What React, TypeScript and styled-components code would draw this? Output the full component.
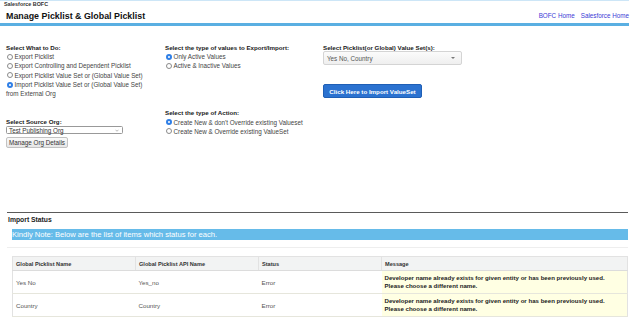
import React from 'react';
import styled, { createGlobalStyle } from 'styled-components';

const GlobalStyle = createGlobalStyle`
  html, body {
    margin: 0;
    padding: 0;
    background: #ffffff;
    font-family: 'Liberation Sans', Arial, Helvetica, sans-serif;
    color: #1e1e1e;
  }
`;

const whatToDo = [
  { label: 'Export Picklist', checked: false },
  { label: 'Export Controlling and Dependent Picklist', checked: false },
  { label: 'Export Picklist Value Set or (Global Value Set)', checked: false },
  { label: 'Import Picklist Value Set or (Global Value Set)', checked: true },
];

const valueTypes = [
  { label: 'Only Active Values', checked: true },
  { label: 'Active & Inactive Values', checked: false },
];

const actions = [
  { label: "Create New & don't Override existing Valueset", checked: true },
  { label: 'Create New & Override existing ValueSet', checked: false },
];

const results = [
  { name: 'Yes No', api: 'Yes_no', status: 'Error' },
  { name: 'Country', api: 'Country', status: 'Error' },
];

const MESSAGE =
  'Developer name already exists for given entity or has been previously used.';

const Radio: React.FC<{ label: string; checked: boolean }> = ({
  label,
  checked,
}) => (
  <RadioRow>
    <Circle $checked={checked} />
    <span>{label}</span>
  </RadioRow>
);

export default function App() {
  return (
    <Page>
      <GlobalStyle />
      <Header>
        <BrandBlock>
          <Brand>Salesforce BOFC</Brand>
          <Title>Manage Picklist &amp; Global Picklist</Title>
        </BrandBlock>
        <Links>
          <NavLink>BOFC Home</NavLink>
          <NavLink>Salesforce Home</NavLink>
        </Links>
      </Header>

      <Form>
        <Field>
          <Label>Select What to Do:</Label>
          {whatToDo.map((o) => (
            <Radio key={o.label} {...o} />
          ))}
          <Plain>from External Org</Plain>
        </Field>
        <Field>
          <Label>Select the type of values to Export/Import:</Label>
          {valueTypes.map((o) => (
            <Radio key={o.label} {...o} />
          ))}
        </Field>
        <Field>
          <Label>Select Picklist(or Global) Value Set(s):</Label>
          <MultiSelect>
            <span>Yes No, Country</span>
            <Caret />
          </MultiSelect>
          <ImportButton>Click Here to Import ValueSet</ImportButton>
        </Field>

        <Field $offset={9}>
          <Label>Select Source Org:</Label>
          <OrgSelect>
            <span>Test Publishing Org</span>
            <Chevron viewBox="0 0 8 5">
              <path d="M1 1 L4 4 L7 1" fill="none" stroke="#666" strokeWidth="0.9" />
            </Chevron>
          </OrgSelect>
          <GreyButton>Manage Org Details</GreyButton>
        </Field>
        <Field>
          <Label>Select the type of Action:</Label>
          {actions.map((o) => (
            <Radio key={o.label} {...o} />
          ))}
        </Field>
        <div />
      </Form>

      <Status>
        <StatusTitle>Import Status</StatusTitle>
        <Note>Kindly Note: Below are the list of items which status for each.</Note>
        <Spacer />
        <Table>
          <colgroup>
            <col style={{ width: 123 }} />
            <col style={{ width: 123 }} />
            <col style={{ width: 123 }} />
            <col />
          </colgroup>
          <thead>
            <tr>
              <Th>Global Picklist Name</Th>
              <Th>Global Picklist API Name</Th>
              <Th>Status</Th>
              <Th>Message</Th>
            </tr>
          </thead>
          <tbody>
            {results.map((r) => (
              <tr key={r.name}>
                <Td>{r.name}</Td>
                <Td>{r.api}</Td>
                <Td>{r.status}</Td>
                <MessageCell>
                  {MESSAGE}
                  <br />
                  Please choose a different name.
                </MessageCell>
              </tr>
            ))}
          </tbody>
        </Table>
      </Status>
    </Page>
  );
}

// Styled Components Definitions
const Page = styled.div`
  width: 640px;
  height: 322px;
  overflow: hidden;
  font-size: 6.3px;
`;

const Header = styled.div`
  width: 629px;
  display: flex;
  justify-content: space-between;
  align-items: flex-end;
  border-top: 1.5px solid #cde6f7;
  border-bottom: 3px solid #5aafe2;
  padding: 1px 0 2px 0;
  box-sizing: border-box;
  height: 26px;
`;

const BrandBlock = styled.div`
  display: flex;
  flex-direction: column;
  padding-left: 4px;
`;

const Brand = styled.div`
  font-size: 5.4px;
  font-weight: 700;
  color: #333;
  line-height: 7px;
  margin-bottom: 3px;
`;

const Title = styled.div`
  font-size: 8.9px;
  font-weight: 700;
  color: #111;
  line-height: 10px;
  padding-left: 2px;
`;

const Links = styled.div`
  display: flex;
  gap: 6px;
  padding-bottom: 2px;
`;

const NavLink = styled.span`
  color: #3b3bd6;
  font-size: 6.3px;
`;

const Form = styled.div`
  display: grid;
  grid-template-columns: 159px 158px 150px;
  padding: 18px 0 0 6px;
  row-gap: 11px;
`;

const Field = styled.div<{ $offset?: number }>`
  display: flex;
  flex-direction: column;
  align-items: flex-start;
  padding-top: ${(p) => p.$offset || 0}px;
`;

const Label = styled.div`
  font-weight: 700;
  font-size: 6.2px;
  line-height: 8px;
  color: #1a1a1a;
`;

const RadioRow = styled.div`
  display: flex;
  align-items: center;
  gap: 2px;
  height: 9.3px;
  color: #444;
`;

const Circle = styled.span<{ $checked: boolean }>`
  flex-shrink: 0;
  display: block;
  width: 6px;
  height: 6px;
  border-radius: 50%;
  box-sizing: border-box;
  border: ${(p) => (p.$checked ? '2px solid #2f7fe6' : '0.7px solid #8a8a8a')};
  background: #fff;
  margin-left: 0.5px;
`;

const Plain = styled.div`
  height: 9.3px;
  line-height: 9.3px;
  color: #444;
`;

const MultiSelect = styled.div`
  margin-top: -1px;
  width: 139px;
  height: 14px;
  box-sizing: border-box;
  border: 0.7px solid #d4d4d4;
  border-radius: 2px;
  background: linear-gradient(#fbfbfb, #efefef);
  display: flex;
  align-items: center;
  justify-content: space-between;
  padding: 0 6px 0 3px;
  color: #555;
`;

const Caret = styled.span`
  width: 0;
  height: 0;
  border-left: 2.5px solid transparent;
  border-right: 2.5px solid transparent;
  border-top: 2.5px solid #777;
`;

const ImportButton = styled.div`
  margin-top: 19px;
  width: 99px;
  height: 14px;
  box-sizing: border-box;
  background: #2b72d0;
  border: 0.7px solid #1f5fb5;
  border-radius: 2px;
  color: #fff;
  font-weight: 700;
  font-size: 6.2px;
  display: flex;
  align-items: center;
  justify-content: center;
`;

const OrgSelect = styled.div`
  width: 117px;
  height: 8px;
  box-sizing: border-box;
  border: 0.7px solid #999;
  border-radius: 1.5px;
  display: flex;
  align-items: center;
  justify-content: space-between;
  padding: 0 3px 0 2px;
  color: #333;
`;

const Chevron = styled.svg`
  width: 4px;
  height: 3px;
`;

const GreyButton = styled.div`
  margin-top: 3px;
  height: 11px;
  box-sizing: border-box;
  padding: 0 2px;
  border: 0.7px solid #c2c2c2;
  border-radius: 2px;
  background: linear-gradient(#fafafa, #e6e6e6);
  display: flex;
  align-items: center;
  color: #333;
`;

const Status = styled.div`
  margin: 64px 12px 0 7px;
  border-top: 1px solid #5a5a5a;
`;

const StatusTitle = styled.div`
  font-weight: 700;
  font-size: 6.8px;
  color: #222;
  padding: 3px 0 0 1px;
  height: 16px;
  box-sizing: border-box;
`;

const Note = styled.div`
  margin-left: 5px;
  height: 11px;
  background: #66bbe9;
  color: #fff;
  font-size: 7.6px;
  line-height: 11px;
  padding-left: 0;
`;

const Spacer = styled.div`
  height: 7px;
  border-bottom: 1px solid #eeeeee;
  margin-bottom: 8px;
`;

const Table = styled.table`
  margin-left: 5px;
  width: 616px;
  table-layout: fixed;
  border-collapse: collapse;
  border: 0.8px solid #e2e2e2;
  border-bottom: 1px solid #e2e2e2;
`;

const Th = styled.th`
  background: #f2f3f3;
  height: 13px;
  padding: 0 0 0 3px;
  text-align: left;
  font-size: 5.6px;
  font-weight: 700;
  color: #333;
  border-right: 0.7px solid #e2e2e2;
  border-bottom: 1px solid #dcdcdc;
`;

const Td = styled.td`
  height: 22px;
  padding: 0 0 0 3px;
  font-size: 6.2px;
  color: #555;
  border-bottom: 0.8px solid #e6e6dc;
`;

const MessageCell = styled.td`
  height: 22px;
  padding: 0 0 0 3px;
  background: #ffffe3;
  font-size: 6.1px;
  font-weight: 700;
  line-height: 8.5px;
  color: #222;
  border-bottom: 0.8px solid #e6e6dc;
`;
